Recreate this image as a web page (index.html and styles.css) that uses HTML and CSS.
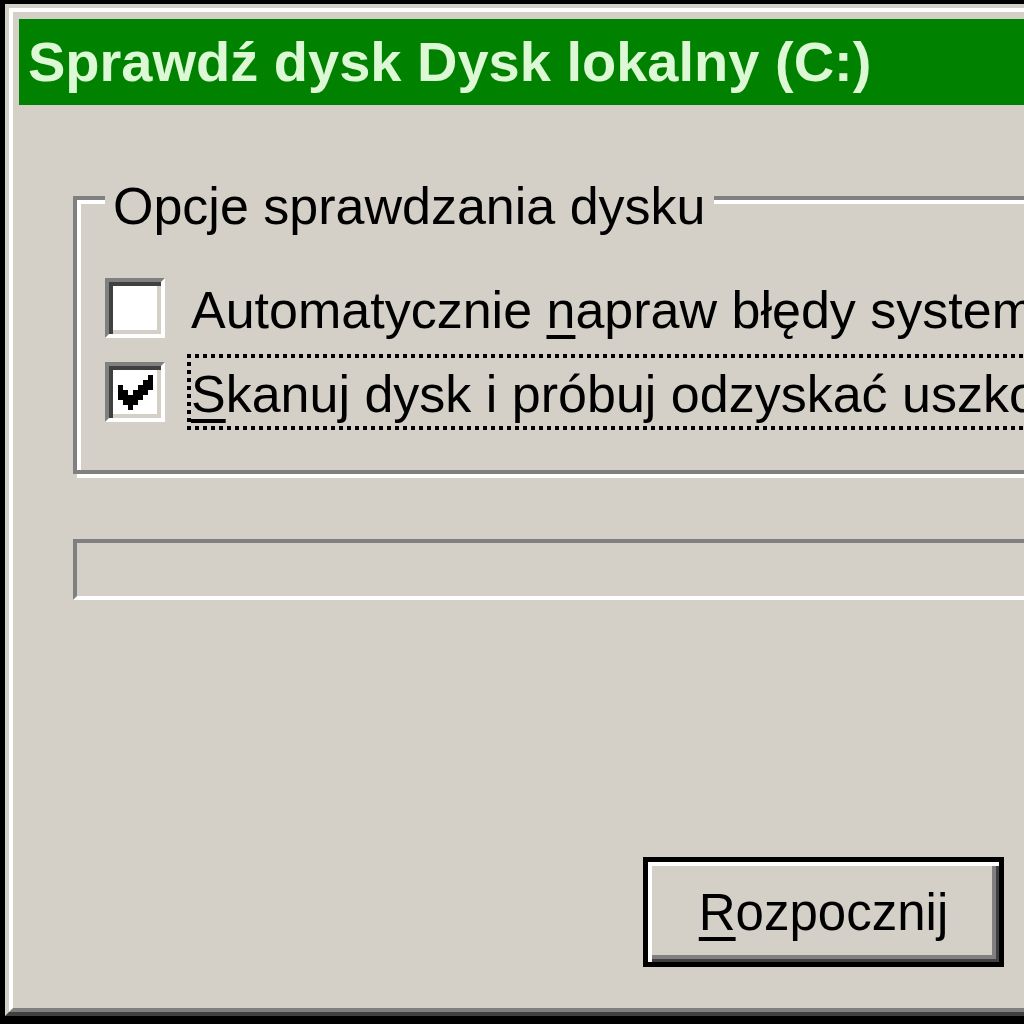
FILE: index.html
```html
<!DOCTYPE html>
<html lang="pl">
<head>
    <meta charset="UTF-8">
    <title>Sprawdź dysk Dysk lokalny (C:)</title>
    <link rel="stylesheet" href="styles.css">
</head>
<body>
    <div class="frame">
        <div class="frame-inner">
            <div class="titlebar">Sprawdź dysk Dysk lokalny (C:)</div>
            <div class="client">
                <fieldset class="group">
                    <legend>Opcje sprawdzania dysku</legend>
                    <div class="option">
                        <span class="check"></span>
                        <span class="label">Automatycznie <u>n</u>apraw błędy systemu plików</span>
                    </div>
                    <div class="option">
                        <span class="check">
                            <svg width="35" height="35" viewBox="0 0 7 7" shape-rendering="crispEdges">
                                <path d="M6 0h1v1h-1z M5 1h2v1h-2z M0 2h1v1h-1z M4 2h3v1h-3z M0 3h2v1h-2z M3 3h3v1h-3z M0 4h5v1h-5z M1 5h3v1h-3z M2 6h1v1h-1z" fill="#000"/>
                            </svg>
                        </span>
                        <span class="label focus"><u>S</u>kanuj dysk i próbuj odzyskać uszkodzone sektory</span>
                    </div>
                </fieldset>
                <div class="progress"></div>
                <button class="button"><u>R</u>ozpocznij</button>
            </div>
        </div>
    </div>
</body>
</html>
```

FILE: styles.css
```css
html, body {
    margin: 0;
    height: 100%;
    overflow: hidden;
    background: #000;
}
body {
    font-family: 'Liberation Sans', Arial, sans-serif;
    font-size: 52px;
    color: #000;
}
.frame {
    margin: 4px 0 0 5px;
    width: 1300px;
    height: 1012px;
    box-sizing: border-box;
    border: 4px solid;
    border-color: #d4d0c8 #404040 #404040 #d4d0c8;
    background: #d4d0c8;
}
.frame-inner {
    height: 100%;
    box-sizing: border-box;
    border: 4px solid;
    border-color: #fff #808080 #808080 #fff;
    padding: 7px 6px;
}
.titlebar {
    height: 86px;
    line-height: 86px;
    padding-left: 9px;
    background: #008200;
    color: #dcf8d4;
    font-size: 56px;
    font-weight: bold;
    white-space: nowrap;
}
u {
    text-decoration-thickness: 4px;
    text-underline-offset: 7px;
}
.group {
    margin: 55px 0 0 54px;
    padding: 34px 0 40px 28px;
    border: 4px solid #808080;
    box-shadow: inset 4px 4px 0 #fff, 4px 4px 0 #fff;
}
.group legend {
    padding: 16px 8px 0;
    background: #d4d0c8;
    white-space: nowrap;
}
.option {
    display: flex;
    align-items: center;
    height: 76px;
    margin-bottom: 8px;
}
.option:last-child {
    margin-bottom: 0;
}
.check {
    flex: none;
    width: 60px;
    height: 60px;
    box-sizing: border-box;
    border: 4px solid;
    border-color: #808080 #fff #fff #808080;
    box-shadow: inset 4px 4px 0 #404040, inset -4px -4px 0 #d4d0c8;
    background: #fff;
    display: flex;
    align-items: center;
    justify-content: center;
    margin-right: 22px;
}
.label {
    flex: 1;
    height: 100%;
    box-sizing: border-box;
    padding: 4px 0 0 4px;
    line-height: 72px;
    white-space: nowrap;
}
.label.focus {
    background:
        linear-gradient(90deg, #000 50%, transparent 50%) top left / 8px 4px repeat-x,
        linear-gradient(90deg, #000 50%, transparent 50%) bottom left / 8px 4px repeat-x,
        linear-gradient(#000 50%, transparent 50%) top left / 4px 8px repeat-y;
}
.progress {
    margin: 65px 0 0 54px;
    height: 61px;
    box-sizing: border-box;
    border: 4px solid;
    border-color: #808080 #fff #fff #808080;
}
.button {
    display: block;
    margin: 257px 0 0 624px;
    width: 361px;
    height: 110px;
    border: 5px solid #000;
    background: #d4d0c8;
    box-shadow: inset 4px 4px 0 #fff, inset -3px -3px 0 #404040, inset -7px -7px 0 #808080;
    font-family: inherit;
    font-size: 51px;
    color: #000;
    padding: 0;
}
```
